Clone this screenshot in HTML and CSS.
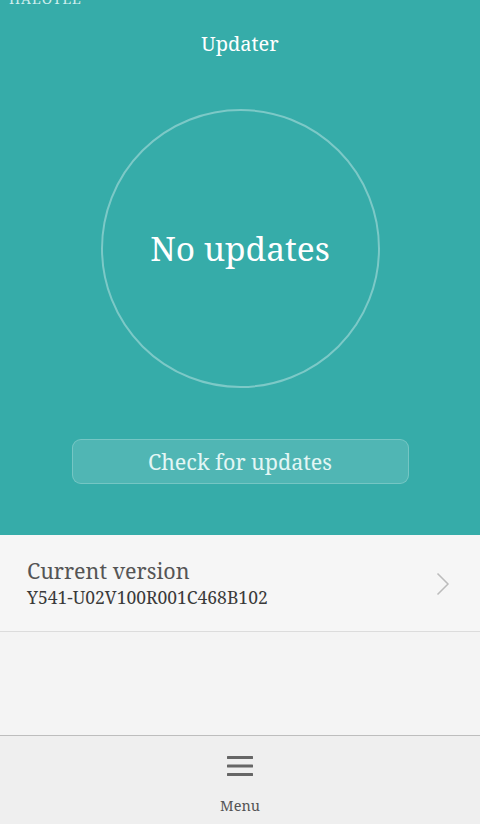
FILE: index.html
```html
<!DOCTYPE html>
<html lang="en">
<head>
<meta charset="UTF-8" />
<title>Updater</title>
<meta name="viewport" content="width=device-width, initial-scale=1" />
<link rel="stylesheet" href="styles.css">
</head>
<body>
<section class="hero">
  <div class="carrier">HALOTEL</div>
  <h1 class="title">Updater</h1>
  <div class="ring"><span>No updates</span></div>
  <button class="check">Check for updates</button>
</section>

<section class="version">
  <div class="version-text">
    <div class="version-label">Current version</div>
    <div class="version-id">Y541-U02V100R001C468B102</div>
  </div>
  <svg class="chev" width="14" height="24" viewBox="0 0 14 24"><path d="M1.5 1.5 L12 12 L1.5 22.5" fill="none" stroke="#bcbcbc" stroke-width="1.5"/></svg>
</section>

<div class="filler"></div>

<nav class="bottom">
  <svg class="burger" width="26" height="22" viewBox="0 0 26 22"><path d="M1 2.5h24M1 11h24M1 19.5h24" stroke="#666" stroke-width="3" stroke-linecap="round"/></svg>
  <span>Menu</span>
</nav>
</body>
</html>
```

FILE: styles.css
```css
:root {
  --teal:#36aca9;
  --serif:"Noto Serif","Droid Serif","DejaVu Serif","Liberation Serif",serif;
}

html, body { height:100%; }
body { margin:0; font-family:var(--serif); background:#f4f4f4; display:flex; flex-direction:column; overflow:hidden; }

.hero { background:var(--teal); height:535px; display:flex; flex-direction:column; align-items:center; position:relative; }
.carrier { position:absolute; left:9px; top:-11px; font-size:14px; letter-spacing:1px; color:#cfeeed; }
.title { margin:31px 0 0; font-size:20px; line-height:26px; font-weight:400; color:#fff; }
.ring { box-sizing:border-box; margin-top:52px; width:279px; height:279px; border:2.5px solid rgba(255,255,255,.35); border-radius:50%; display:flex; align-items:center; justify-content:center; }
.ring span { font-size:33.5px; color:#fff; margin-top:-2px; }
.check { margin-top:51px; width:337px; height:45px; border:1px solid rgba(255,255,255,.22); border-radius:9px; background:rgba(255,255,255,.13); color:#e3f6f5; font:21.5px var(--serif); padding:0; }

.version { background:#f6f6f6; height:96px; border-bottom:1px solid #dcdcdc; display:flex; align-items:center; padding:0 30px 0 27px; }
.version-text { flex:1; }
.version-label { font-size:21.5px; color:#555; line-height:28px; }
.version-id { font-size:17.5px; color:#3a3a3a; line-height:24px; }
.chev { display:block; margin-top:1px; }

.filler { flex:1; background:#f4f4f4; }

.bottom { height:88px; border-top:1px solid #bdbdbd; background:#efefef; display:flex; flex-direction:column; align-items:center; }
.burger { margin-top:19px; display:block; }
.bottom span { margin-top:18px; font-size:14.5px; color:#555; }
```
